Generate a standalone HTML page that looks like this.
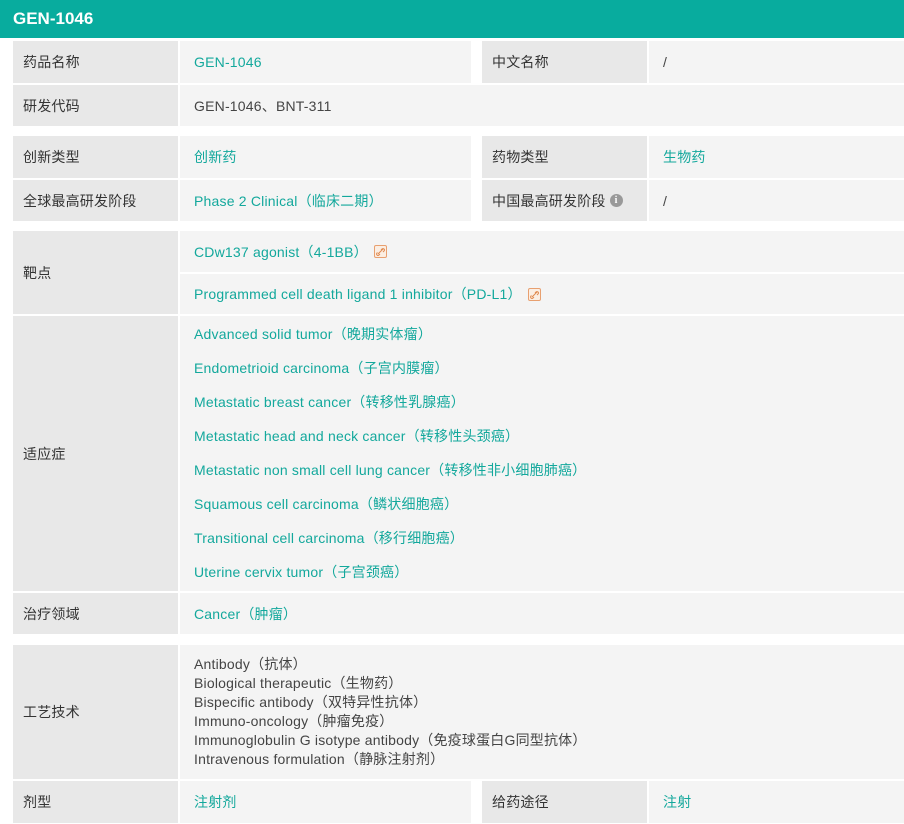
<!DOCTYPE html>
<html><head><meta charset="utf-8"><style>
*{margin:0;padding:0;box-sizing:border-box}
body{width:904px;height:824px;background:#fff;font-family:"Liberation Sans","Noto Sans CJK SC",sans-serif;font-size:14px;color:#444;position:relative;overflow:hidden;letter-spacing:0.2px}
.h{position:absolute;left:0;top:0;width:904px;height:38px;background:#08ac9e;color:#fff;font-weight:bold;font-size:17px;line-height:38px;padding-left:13px;letter-spacing:0}
.c{position:absolute;display:flex;align-items:center}
.l{background:#e8e8e8;padding-left:10px;color:#333}
.v{background:#f4f4f4;padding-left:14px}
.t{color:#13a89c}
.ic{display:inline-block;width:13px;height:13px;border:1px solid #e8a070;background:#fbeee3;border-radius:2px;margin-left:6px;vertical-align:middle;position:relative}
.ic svg{position:absolute;left:1px;top:1px}
.i{display:inline-block;width:13px;height:13px;border-radius:50%;background:#999;color:#fff;font-size:10px;font-weight:bold;text-align:center;line-height:13px;margin-left:4px;font-family:"Liberation Serif",serif}
.list div{height:34px;line-height:34px}
</style></head><body>
<div class="h">GEN-1046</div>
<div class="c l" style="left:13px;top:41px;width:165px;height:42px">药品名称</div>
<div class="c v t" style="left:180px;top:41px;width:291px;height:42px">GEN-1046</div>
<div class="c l" style="left:482px;top:41px;width:165px;height:42px">中文名称</div>
<div class="c v" style="left:649px;top:41px;width:255px;height:42px">/</div>
<div class="c l" style="left:13px;top:85px;width:165px;height:41px">研发代码</div>
<div class="c v" style="left:180px;top:85px;width:724px;height:41px">GEN-1046、BNT-311</div>

<div class="c l" style="left:13px;top:136px;width:165px;height:42px">创新类型</div>
<div class="c v t" style="left:180px;top:136px;width:291px;height:42px">创新药</div>
<div class="c l" style="left:482px;top:136px;width:165px;height:42px">药物类型</div>
<div class="c v t" style="left:649px;top:136px;width:255px;height:42px">生物药</div>
<div class="c l" style="left:13px;top:180px;width:165px;height:41px">全球最高研发阶段</div>
<div class="c v t" style="left:180px;top:180px;width:291px;height:41px">Phase 2 Clinical（临床二期）</div>
<div class="c l" style="left:482px;top:180px;width:165px;height:41px">中国最高研发阶段<span class="i">i</span></div>
<div class="c v" style="left:649px;top:180px;width:255px;height:41px">/</div>

<div class="c l" style="left:13px;top:231px;width:165px;height:83px">靶点</div>
<div class="c v t" style="left:180px;top:231px;width:724px;height:41px">CDw137 agonist（4-1BB）<span class="ic"><svg width="9" height="9" viewBox="0 0 9 9"><path d="M2 7L7 2M1.5 5.5l-0.5 0.5a1.4 1.4 0 0 0 2 2l1-1M5 3l1-1a1.4 1.4 0 0 1 2 2l-1 1" stroke="#e08a50" stroke-width="1" fill="none"/></svg></span></div>
<div class="c v t" style="left:180px;top:274px;width:724px;height:40px">Programmed cell death ligand 1 inhibitor（PD-L1）<span class="ic"><svg width="9" height="9" viewBox="0 0 9 9"><path d="M2 7L7 2M1.5 5.5l-0.5 0.5a1.4 1.4 0 0 0 2 2l1-1M5 3l1-1a1.4 1.4 0 0 1 2 2l-1 1" stroke="#e08a50" stroke-width="1" fill="none"/></svg></span></div>
<div class="c l" style="left:13px;top:316px;width:165px;height:275px">适应症</div>
<div class="c v t list" style="left:180px;top:316px;width:724px;height:275px;display:block;padding-top:1px">
<div>Advanced solid tumor（晚期实体瘤）</div><div>Endometrioid carcinoma（子宫内膜瘤）</div><div>Metastatic breast cancer（转移性乳腺癌）</div><div>Metastatic head and neck cancer（转移性头颈癌）</div><div>Metastatic non small cell lung cancer（转移性非小细胞肺癌）</div><div>Squamous cell carcinoma（鳞状细胞癌）</div><div>Transitional cell carcinoma（移行细胞癌）</div><div>Uterine cervix tumor（子宫颈癌）</div></div>
<div class="c l" style="left:13px;top:593px;width:165px;height:41px">治疗领域</div>
<div class="c v t" style="left:180px;top:593px;width:724px;height:41px">Cancer（肿瘤）</div>

<div class="c l" style="left:13px;top:645px;width:165px;height:134px">工艺技术</div>
<div class="c v" style="left:180px;top:645px;width:724px;height:134px;display:block;padding-top:10px;line-height:19px">Antibody（抗体）<br>Biological therapeutic（生物药）<br>Bispecific antibody（双特异性抗体）<br>Immuno-oncology（肿瘤免疫）<br>Immunoglobulin G isotype antibody（免疫球蛋白G同型抗体）<br>Intravenous formulation（静脉注射剂）</div>
<div class="c l" style="left:13px;top:781px;width:165px;height:42px">剂型</div>
<div class="c v t" style="left:180px;top:781px;width:291px;height:42px">注射剂</div>
<div class="c l" style="left:482px;top:781px;width:165px;height:42px">给药途径</div>
<div class="c v t" style="left:649px;top:781px;width:255px;height:42px">注射</div>
</body></html>
